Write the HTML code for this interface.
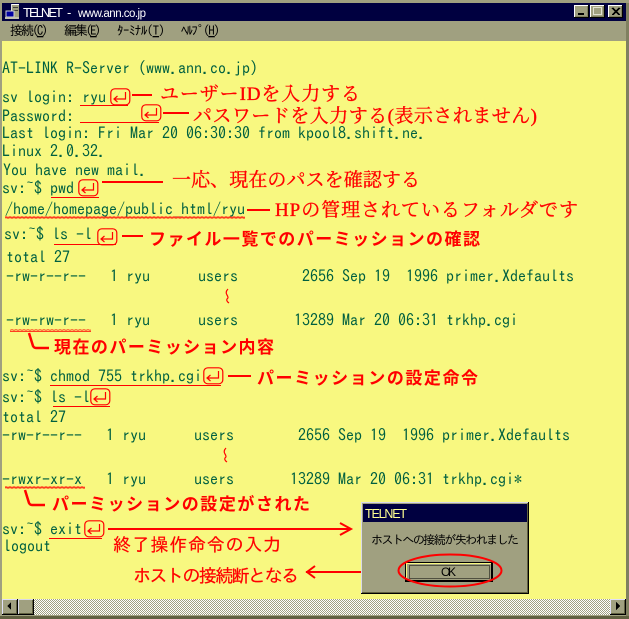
<!DOCTYPE html>
<html lang="ja"><head><meta charset="utf-8"><style>
html,body{margin:0;padding:0;background:#a0a080}
#s{display:block;position:absolute;left:0;top:0}
.t{font-family:"IPAGothic","Liberation Mono",monospace;font-size:16px;fill:#006040;white-space:pre}
.m{font-family:"IPAGothic","Noto Sans CJK JP",sans-serif;font-size:13px;fill:#000;white-space:pre}
.r{font-family:"Liberation Serif","Noto Serif CJK SC",serif;font-size:19px;fill:#f00;stroke:#f00;stroke-width:.35px;white-space:pre}
.b{font-family:"Noto Sans CJK JP",sans-serif;font-weight:700;font-size:17px;fill:#f00;white-space:pre}
.g{font-family:"IPAGothic","Noto Sans CJK JP",sans-serif;font-size:18px;fill:#f00;stroke:#f00;stroke-width:.2px;white-space:pre}
.l{stroke:#f00;fill:none}
</style></head><body>
<svg id="s" width="629" height="619" viewBox="0 0 629 619" xmlns="http://www.w3.org/2000/svg" shape-rendering="crispEdges">
<defs>
<pattern id="ck" width="2" height="2" patternUnits="userSpaceOnUse"><rect width="2" height="2" fill="#fff"/><rect width="1" height="1" fill="#a0a080"/><rect x="1" y="1" width="1" height="1" fill="#a0a080"/></pattern>
<pattern id="wv" width="4" height="3" patternUnits="userSpaceOnUse"><path d="M0 2h1v-1h2v1h1" stroke="#f00" fill="none"/></pattern>
<g id="en" shape-rendering="auto"><rect x=".8" y=".8" width="19" height="16" rx="4" fill="none" stroke="#f00" stroke-width="1.2"/><path d="M15.500 4v7h-11M7.500 8l-3.500 3 3.500 3" fill="none" stroke="#f00" stroke-width="1.200"/></g>
</defs>
<rect width="629" height="619" fill="#a0a080"/>
<rect x="626" y="3" width="3" height="616" fill="#808060"/>
<rect y="616" width="629" height="3" fill="#606040"/>
<rect x="2" y="3" width="624" height="18" fill="#000040"/>
<rect x="2" y="41" width="624" height="558" fill="#f8f880"/>

<!-- title icon -->
<rect x="11" y="4" width="8" height="13" fill="#a0a080"/>
<rect x="11" y="4" width="8" height="1" fill="#fff"/>
<rect x="11" y="4" width="1" height="13" fill="#e0e0e0"/>
<rect x="13" y="7" width="5" height="1" fill="#404040"/>
<rect x="13" y="10" width="5" height="1" fill="#404040"/>
<rect x="6" y="11" width="8" height="6" fill="#0000a0" stroke="#d0d0d0"/>
<rect x="5" y="17" width="14" height="2" fill="#c0c0b0"/>
<text x="23" y="17" font-family="Liberation Sans" font-size="13" fill="#fff" textLength="40">TELNET</text>
<text x="67" y="17" font-family="Liberation Sans" font-size="13" fill="#fff">-</text>
<text x="78" y="17" font-family="Liberation Sans" font-size="11.500" fill="#fff" textLength="68">www.ann.co.jp</text>

<!-- window buttons -->
<g>
<rect x="574" y="5" width="15" height="13" fill="#000"/><rect x="574" y="5" width="14" height="12" fill="#fff"/><rect x="575" y="6" width="13" height="11" fill="#808060"/><rect x="575" y="6" width="12" height="10" fill="#a0a080"/><rect x="578" y="13" width="6" height="2" fill="#000"/>
<rect x="590" y="5" width="15" height="13" fill="#000"/><rect x="590" y="5" width="14" height="12" fill="#fff"/><rect x="591" y="6" width="13" height="11" fill="#808060"/><rect x="591" y="6" width="12" height="10" fill="#a0a080"/><rect x="593.500" y="7.500" width="8" height="7" fill="none" stroke="#e0e0d0"/>
<rect x="608" y="5" width="15" height="13" fill="#000"/><rect x="608" y="5" width="14" height="12" fill="#fff"/><rect x="609" y="6" width="13" height="11" fill="#808060"/><rect x="609" y="6" width="12" height="10" fill="#a0a080"/><path d="M612 8l7 7M613 8l7 7M619 8l-7 7M620 8l-7 7" stroke="#000"/>
</g>

<!-- menu -->
<text class="m" x="10" y="35" textLength="38">接続(<tspan text-decoration="underline">C</tspan>)</text>
<text class="m" x="64" y="35" textLength="37">編集(<tspan text-decoration="underline">E</tspan>)</text>
<text class="m" x="117" y="35" textLength="48">ﾀｰﾐﾅﾙ(<tspan text-decoration="underline">T</tspan>)</text>
<text class="m" x="181" y="35" textLength="39">ﾍﾙﾌﾟ(<tspan text-decoration="underline">H</tspan>)</text>

<!-- terminal text -->
<text class="t" x="2" y="74">AT-LINK R-Server (www.ann.co.jp)</text>
<text class="t" x="2" y="103">sv login: ryu</text>
<text class="t" x="2" y="122">Password:</text>
<text class="t" x="2" y="139">Last login: Fri Mar 20 06:30:30 from kpool8.shift.ne.</text>
<text class="t" x="2" y="157">Linux 2.0.32.</text>
<text class="t" x="3" y="176">You have new mail.</text>
<text class="t" x="2" y="194">sv:~$ pwd</text>
<text class="t" x="5" y="215">/home/homepage/public_html/ryu</text>
<text class="t" x="4" y="240">sv:~$ ls -l</text>
<text class="t" x="6" y="263">total 27</text>
<text class="t" x="6" y="282">-rw-r--r--   1 ryu      users        2656 Sep 19  1996 primer.Xdefaults</text>
<text class="t" x="6" y="326">-rw-rw-r--   1 ryu      users       13289 Mar 20 06:31 trkhp.cgi</text>
<text class="t" x="2" y="382">sv:~$ chmod 755 trkhp.cgi</text>
<text class="t" x="2" y="403">sv:~$ ls -l</text>
<text class="t" x="2" y="423">total 27</text>
<text class="t" x="2" y="441">-rw-r--r--   1 ryu      users        2656 Sep 19  1996 primer.Xdefaults</text>
<text class="t" x="2" y="485">-rwxr-xr-x   1 ryu      users       13289 Mar 20 06:31 trkhp.cgi*</text>
<text class="t" x="2" y="535">sv:~$ exit</text>
<text class="t" x="3" y="552">logout</text>

<!-- red labels -->
<text class="r" x="160" y="100" textLength="200">ユーザーIDを入力する</text>
<text class="r" x="193" y="122" textLength="344">パスワードを入力する(表示されません)</text>
<text class="r" x="172" y="186" textLength="248">一応、現在のパスを確認する</text>
<text class="r" x="275" y="216" textLength="303">HPの管理されているフォルダです</text>
<text class="b" x="149" y="245" textLength="331">ファイル一覧でのパーミッションの確認</text>
<text class="b" x="54" y="353" textLength="220">現在のパーミッション内容</text>
<text class="b" x="257" y="384" textLength="221">パーミッションの設定命令</text>
<text class="b" x="52" y="510" textLength="258">パーミッションの設定がされた</text>
<text class="g" x="113" y="551" textLength="168">終了操作命令の入力</text>
<text class="g" x="133" y="582" textLength="166">ホストの接続断となる</text>

<!-- red lines -->
<g fill="#f00">
<rect x="80" y="105" width="48" height="1"/><rect x="132" y="94" width="20" height="2"/>
<rect x="80" y="122" width="79" height="1"/><rect x="163" y="112" width="26" height="2"/>
<rect x="51" y="197" width="48" height="1"/><rect x="102" y="181" width="61" height="2"/>
<rect x="247" y="209" width="23" height="2"/>
<rect x="54" y="244" width="62" height="1"/><rect x="122" y="235" width="21" height="2"/>
<rect x="50" y="385" width="171" height="1"/><rect x="228" y="375" width="23" height="2"/>
<rect x="53" y="406" width="57" height="1"/>
<rect x="49" y="538" width="53" height="1"/><rect x="108" y="528" width="243" height="2"/>
<rect x="306" y="571" width="92" height="2"/>
</g>
<rect x="5" y="216" width="240" height="3" fill="url(#wv)"/>
<rect x="10" y="329" width="81" height="3" fill="url(#wv)"/>
<rect x="5" y="486" width="80" height="3" fill="url(#wv)"/>
<path class="l" shape-rendering="auto" stroke-width="2.500" d="M29 333l4 13q1 2 3 2h13"/>
<path class="l" shape-rendering="auto" stroke-width="2.500" d="M25 490l4 13q1 2 3 2h13"/>
<path class="l" shape-rendering="auto" stroke-width="1.200" d="M228 289q-3 3-1 6t0 4q-1 2 2 4"/>
<path class="l" shape-rendering="auto" stroke-width="1.200" d="M226 448q-3 3-1 6t0 4q-1 2 2 4"/>
<path class="l" shape-rendering="auto" stroke-width="2" d="M340 523l11 6-11 6"/>
<path class="l" shape-rendering="auto" stroke-width="2" d="M315 566l-8 6 8 6"/>

<use href="#en" x="110" y="88"/>
<use href="#en" x="141" y="104"/>
<use href="#en" x="78" y="179"/>
<use href="#en" x="97" y="228"/>
<use href="#en" x="203" y="367"/>
<use href="#en" x="90" y="388"/>
<use href="#en" x="84" y="520"/>

<!-- dialog -->
<rect x="361" y="502" width="168" height="92" fill="#000"/>
<rect x="361" y="502" width="167" height="91" fill="#d8d8e8"/>
<rect x="362" y="503" width="166" height="90" fill="#606040"/>
<rect x="362" y="503" width="165" height="89" fill="#a0a080"/>
<rect x="363" y="504" width="164" height="18" fill="#000040"/>
<text x="365" y="518" font-family="Liberation Sans" font-size="12.500" fill="#ffff90" textLength="42">TELNET</text>
<text x="371" y="544" font-family="IPAGothic,'Noto Sans CJK JP',sans-serif" font-size="12" fill="#000" textLength="148">ホストへの接続が失われました</text>
<rect x="405" y="562" width="88" height="20" fill="#000"/>
<rect x="406" y="563" width="85" height="17" fill="#f8f880"/>
<rect x="407" y="564" width="84" height="16" fill="#a0a080"/>
<rect x="409.500" y="565.500" width="80" height="13" fill="none" stroke="#000" stroke-dasharray="1 1"/>
<text x="441" y="576" font-family="Liberation Sans" font-size="12" fill="#000" textLength="15">OK</text>
<ellipse class="l" shape-rendering="auto" cx="450" cy="570.500" rx="51.500" ry="16" stroke-width="2"/>

<!-- scrollbar -->
<rect x="2" y="599" width="624" height="16" fill="url(#ck)"/>
<g>
<rect x="2" y="599" width="16" height="16" fill="#000"/><rect x="2" y="599" width="15" height="15" fill="#e0e0f8"/><rect x="3" y="600" width="14" height="14" fill="#606040"/><rect x="3" y="600" width="13" height="13" fill="#a0a080"/><path d="M11 602v8l-4-4z" fill="#000"/>
<rect x="18" y="599" width="16" height="16" fill="#000"/><rect x="18" y="599" width="15" height="15" fill="#d8d8e8"/><rect x="19" y="600" width="14" height="14" fill="#606040"/><rect x="19" y="600" width="13" height="13" fill="#a0a080"/>
<rect x="610" y="599" width="16" height="16" fill="#000"/><rect x="610" y="599" width="15" height="15" fill="#e0e0f8"/><rect x="611" y="600" width="14" height="14" fill="#606040"/><rect x="611" y="600" width="13" height="13" fill="#a0a080"/><path d="M616 602v8l4-4z" fill="#000"/>
</g>
</svg>
</body></html>
